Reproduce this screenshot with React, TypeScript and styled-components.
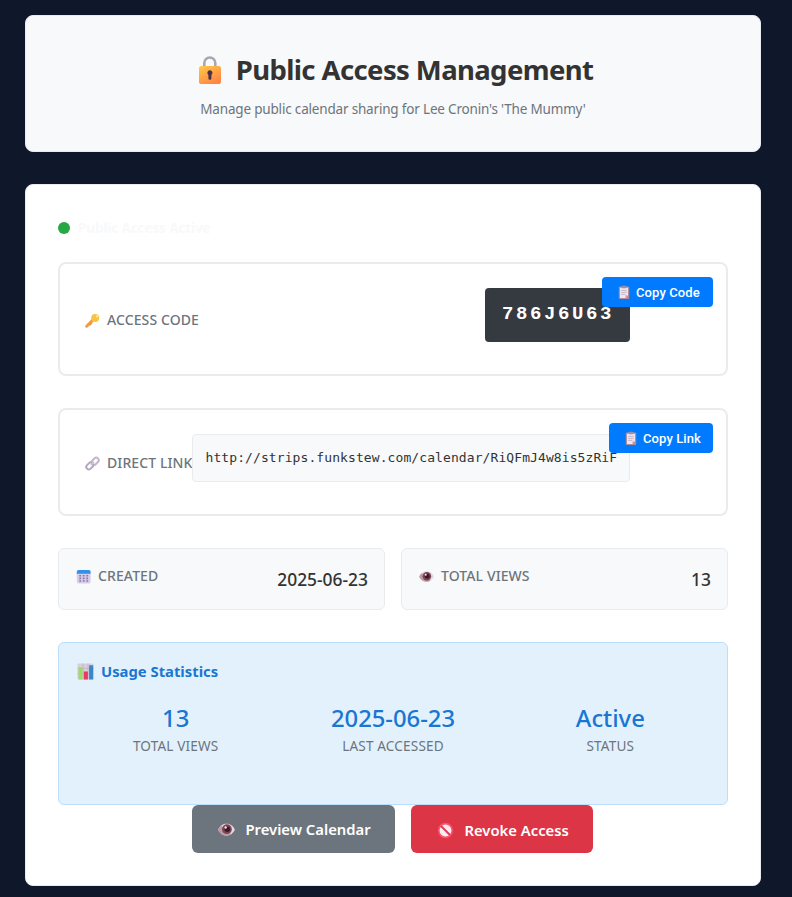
import React from 'react';
import styled, { createGlobalStyle } from 'styled-components';

const GlobalStyle = createGlobalStyle`
  * { box-sizing: border-box; }
  body {
    margin: 0;
    background: #0f172a;
    color: #333;
    font-family: "Noto Sans", "Open Sans", sans-serif;
  }
  button { font-family: inherit; border: 0; cursor: pointer; }
`;

const Page = styled.main`
  width: 736px;
  height: 897px;
  margin-left: 25px;
  padding-top: 15px;
  display: flex;
  flex-direction: column;
  gap: 32px;
`;

const Header = styled.header`
  height: 137px;
  flex: none;
  padding-top: 34px;
  background: #f8f9fa;
  border: 1px solid #e9ecef;
  border-radius: 8px;
  display: flex;
  flex-direction: column;
  align-items: center;
`;

const Title = styled.h1`
  margin: 0;
  height: 40px;
  padding-left: 5px;
  display: flex;
  align-items: center;
  gap: 14px;
  font-size: 27.5px;
  font-weight: 700;
  line-height: 40px;
  letter-spacing: -0.61px;
  white-space: nowrap;
`;

const Subtitle = styled.p`
  margin: 9px 0 0;
  font-size: 13.5px;
  line-height: 20px;
  letter-spacing: -0.18px;
  color: #6c757d;
  white-space: nowrap;
`;

const Panel = styled.section`
  height: 702px;
  flex: none;
  padding: 33px 32px 0;
  background: #fff;
  border: 1px solid #e9ecef;
  border-radius: 8px;
`;

const Status = styled.div`
  height: 20px;
  margin-bottom: 24px;
  display: flex;
  align-items: center;
  gap: 8px;
  font-size: 13.6px;
  font-weight: 700;
  line-height: 20px;
  letter-spacing: -0.15px;
  color: #f8f9fa;
`;

const Dot = styled.span`
  width: 12px;
  height: 12px;
  border-radius: 50%;
  background: #28a745;
`;

const Field = styled.div<{ $height: number }>`
  position: relative;
  height: ${(p) => p.$height}px;
  margin-bottom: 32px;
  padding: 2px 96px 0 25px;
  border: 2px solid #e9ecef;
  border-radius: 8px;
  display: flex;
  align-items: center;
  justify-content: space-between;
`;

const Label = styled.span`
  height: 20px;
  display: flex;
  align-items: center;
  gap: 7px;
  font-size: 14px;
  font-weight: 500;
  line-height: 20px;
  letter-spacing: 0.1px;
  color: #6c757d;
  white-space: nowrap;
`;

const Code = styled.code`
  width: 145px;
  height: 54px;
  margin-bottom: 10px;
  padding-left: 17px;
  background: #343a40;
  color: #fff;
  border-radius: 4px;
  font: 700 19px/53px "Liberation Mono", monospace;
  letter-spacing: 2.6px;
`;

const Url = styled.code`
  width: 438px;
  height: 48px;
  margin-bottom: 10px;
  padding-left: 12px;
  background: #f8f9fa;
  border: 1px solid #e9ecef;
  border-radius: 4px;
  font: 13px/46px "DejaVu Sans Mono", monospace;
  letter-spacing: 0.09px;
  white-space: nowrap;
`;

const CopyButton = styled.button<{ $width: number }>`
  position: absolute;
  top: 13px;
  right: 13px;
  width: ${(p) => p.$width}px;
  height: 30px;
  padding: 1px 0 0 15px;
  display: flex;
  align-items: center;
  gap: 5px;
  background: #007bff;
  color: #fff;
  border-radius: 4px;
  font: 500 13px/29px Roboto, sans-serif;
  letter-spacing: 0.1px;
  white-space: nowrap;
`;

const InfoGrid = styled.div`
  display: grid;
  grid-template-columns: 1fr 1fr;
  gap: 16px;
  margin-bottom: 32px;
`;

const InfoCard = styled.div`
  height: 62px;
  padding: 17px 16px 0 17px;
  display: flex;
  align-items: flex-start;
  justify-content: space-between;
  background: #f8f9fa;
  border: 1px solid #e9ecef;
  border-radius: 6px;
`;

const InfoValue = styled.span`
  padding-top: 1px;
  font-size: 17.4px;
  font-weight: 500;
  line-height: 24px;
`;

const Stats = styled.section`
  height: 163px;
  padding: 17px 16px;
  background: #e3f1fc;
  border: 1px solid #bbdefb;
  border-radius: 6px;
`;

const StatsTitle = styled.h2`
  margin: 0;
  padding-left: 2px;
  display: flex;
  align-items: center;
  gap: 7px;
  font-size: 14.8px;
  font-weight: 700;
  line-height: 22px;
  color: #1976d2;
`;

const StatsRow = styled.div`
  margin-top: 19px;
  display: grid;
  grid-template-columns: repeat(3, 1fr);
  gap: 16px;
  text-align: center;
`;

const StatValue = styled.div`
  font-size: 23.8px;
  font-weight: 500;
  line-height: 34px;
  color: #1976d2;
`;

const StatLabel = styled.div`
  padding-top: 1px;
  font-size: 13.6px;
  line-height: 20px;
  letter-spacing: 0.15px;
  color: #6c757d;
`;

const Actions = styled.div`
  display: flex;
  justify-content: center;
  gap: 16px;
  padding-right: 1px;
`;

const ActionButton = styled.button<{ $width: number; $color: string; $top?: number }>`
  width: ${(p) => p.$width}px;
  height: 48px;
  padding: ${(p) => p.$top ?? 0}px 0 0 26px;
  display: flex;
  align-items: center;
  gap: 10.5px;
  border-radius: 6px;
  background: ${(p) => p.$color};
  color: #fff;
  font-size: 14.8px;
  font-weight: 600;
  white-space: nowrap;
`;

const Svg = styled.svg`
  flex: none;
  display: block;
`;

const LockIcon = () => (
  <Svg width="24" height="30" viewBox="0 0 24 30">
    <defs>
      <linearGradient id="lock" x1="0" y1="0" x2="0.6" y2="1">
        <stop offset="0" stopColor="#ffc84a" />
        <stop offset="1" stopColor="#ff8744" />
      </linearGradient>
    </defs>
    <path d="M6.3 13V8a5.5 5.5 0 0 1 11 0v5" fill="none" stroke="#aaa5b2" strokeWidth="2.6" />
    <rect x="1" y="11" width="22" height="18" rx="2.6" fill="url(#lock)" />
    <path d="M11.9 15.3a2.6 2.6 0 0 0-1.5 4.7v3.2a1.5 1.5 0 0 0 3 0V20a2.6 2.6 0 0 0-1.5-4.7z" fill="#4b3047" />
  </Svg>
);

const KeyIcon = () => (
  <Svg width="15" height="15" viewBox="0 0 15 15">
    <path d="M1.7 13.2 8.5 6.4" stroke="#f59a43" strokeWidth="3" strokeLinecap="round" />
    <path d="M4.5 12.3 6.6 10.2" stroke="#f08c3c" strokeWidth="1.6" />
    <circle cx="10.2" cy="4.9" r="4" fill="#fbc342" />
    <circle cx="12" cy="3.3" r="1.1" fill="#fff0a0" />
  </Svg>
);

const LinkIcon = () => (
  <Svg width="15" height="15" viewBox="0 0 15 15">
    <g fill="none" strokeWidth="2">
      <rect x="6.3" y="2.7" width="7.8" height="5" rx="2.5" transform="rotate(-45 10.2 5.2)" stroke="#c2b6c9" />
      <rect x="0.9" y="7.4" width="7.8" height="5" rx="2.5" transform="rotate(-45 4.8 9.9)" stroke="#b3a7bc" />
      <path d="M5.6 9.3 9.3 5.7" stroke="#d2cad8" strokeWidth="1.5" />
    </g>
  </Svg>
);

const ClipboardIcon = () => (
  <Svg width="14" height="15" viewBox="0 0 14 15">
    <rect x="1.8" y="1.5" width="10.4" height="12.5" rx="1" fill="#b28d99" />
    <path d="M3 2.8h8v7.5L8.5 13H3z" fill="#eee5f4" />
    <path d="M11 10.3H8.5V13z" fill="#ff8f91" />
    <rect x="4.6" y="0.7" width="4.8" height="2.6" rx="0.7" fill="#9a91a6" />
    <path d="M4.2 5.4h5.6M4.2 7.4h5.6M4.2 9.4h4" stroke="#b8afc2" strokeWidth="0.8" />
  </Svg>
);

const CalendarIcon = () => (
  <Svg width="15" height="15" viewBox="0 0 15 15">
    <rect x="0.8" y="1" width="13.8" height="13.5" rx="2" fill="#d9cce8" />
    <path d="M.8 4.8V3a2 2 0 0 1 2-2h9.8a2 2 0 0 1 2 2v1.8z" fill="#2f91e8" />
    <path d="M4.2 6v7M7.7 6v7M11.2 6v7" stroke="#8779ad" strokeWidth="1.8" strokeDasharray="1.6 1" />
  </Svg>
);

const EyeIcon = ({ size = 15 }: { size?: number }) => (
  <Svg width={size} height={size} viewBox="0 0 16 16">
    <path d="M.2 8.2C1.7 4.1 4.8 2.5 8 2.5s6.3 1.6 7.8 5.7c-1.7 3.8-4.6 5.4-7.8 5.4S1.7 12 .2 8.2z" fill="#e2d8df" />
    <path d="M.2 8.2c1.5 3.8 4.6 5.4 7.8 5.4 1.5 0 3-.4 4.3-1.1L2.9 4.4A8.5 8.5 0 0 0 .2 8.2z" fill="#bb9ba5" />
    <circle cx="8.4" cy="7.7" r="4.6" fill="#7b4651" />
    <circle cx="8.7" cy="7.7" r="2.6" fill="#3e1828" />
    <circle cx="7.2" cy="6.1" r="1.1" fill="#f5e7eb" />
  </Svg>
);

const ChartIcon = () => (
  <Svg width="17" height="17" viewBox="0 0 17 17">
    <rect x="0.5" y="0.5" width="16" height="16" rx="1.3" fill="#d6cddd" />
    <path d="M.5 5.5h16M.5 10.5h16M6 .5v16M11 .5v16" stroke="#bdb2c6" strokeWidth="0.7" />
    <rect x="1.5" y="4.3" width="4.1" height="12.2" fill="#9fda69" />
    <rect x="6.8" y="8.5" width="4.1" height="8" fill="#e6386c" />
    <rect x="12.1" y="2.3" width="4.1" height="14.2" fill="#3b85c9" />
  </Svg>
);

const BanIcon = () => (
  <Svg width="17" height="17" viewBox="0 0 17 17">
    <circle cx="8.5" cy="8.5" r="6.8" fill="#f9edf4" stroke="#fa5370" strokeWidth="1.8" />
    <path d="m4 4 9 9" stroke="#e63855" strokeWidth="2" />
  </Svg>
);

const usage = [
  { value: '13', label: 'TOTAL VIEWS' },
  { value: '2025-06-23', label: 'LAST ACCESSED' },
  { value: 'Active', label: 'STATUS' },
];

export default function App() {
  return (
    <>
      <GlobalStyle />
      <Page>
        <Header>
          <Title><LockIcon /><span>Public Access Management</span></Title>
          <Subtitle>Manage public calendar sharing for Lee Cronin's 'The Mummy'</Subtitle>
        </Header>
        <Panel>
          <Status><Dot /><span>Public Access Active</span></Status>
          <Field $height={114}>
            <Label><KeyIcon />ACCESS CODE</Label>
            <Code>786J6U63</Code>
            <CopyButton $width={111}><ClipboardIcon />Copy Code</CopyButton>
          </Field>
          <Field $height={108}>
            <Label><LinkIcon />DIRECT LINK</Label>
            <Url>http://strips.funkstew.com/calendar/RiQFmJ4w8is5zRiF</Url>
            <CopyButton $width={104}><ClipboardIcon />Copy Link</CopyButton>
          </Field>
          <InfoGrid>
            <InfoCard>
              <Label><CalendarIcon />CREATED</Label>
              <InfoValue>2025-06-23</InfoValue>
            </InfoCard>
            <InfoCard>
              <Label><EyeIcon />TOTAL VIEWS</Label>
              <InfoValue>13</InfoValue>
            </InfoCard>
          </InfoGrid>
          <Stats>
            <StatsTitle><ChartIcon />Usage Statistics</StatsTitle>
            <StatsRow>
              {usage.map((item) => (
                <div key={item.label}>
                  <StatValue>{item.value}</StatValue>
                  <StatLabel>{item.label}</StatLabel>
                </div>
              ))}
            </StatsRow>
          </Stats>
          <Actions>
            <ActionButton $width={203} $color="#6c757d"><EyeIcon size={17} />Preview Calendar</ActionButton>
            <ActionButton $width={182} $color="#dc3545" $top={2}><BanIcon />Revoke Access</ActionButton>
          </Actions>
        </Panel>
      </Page>
    </>
  );
}
